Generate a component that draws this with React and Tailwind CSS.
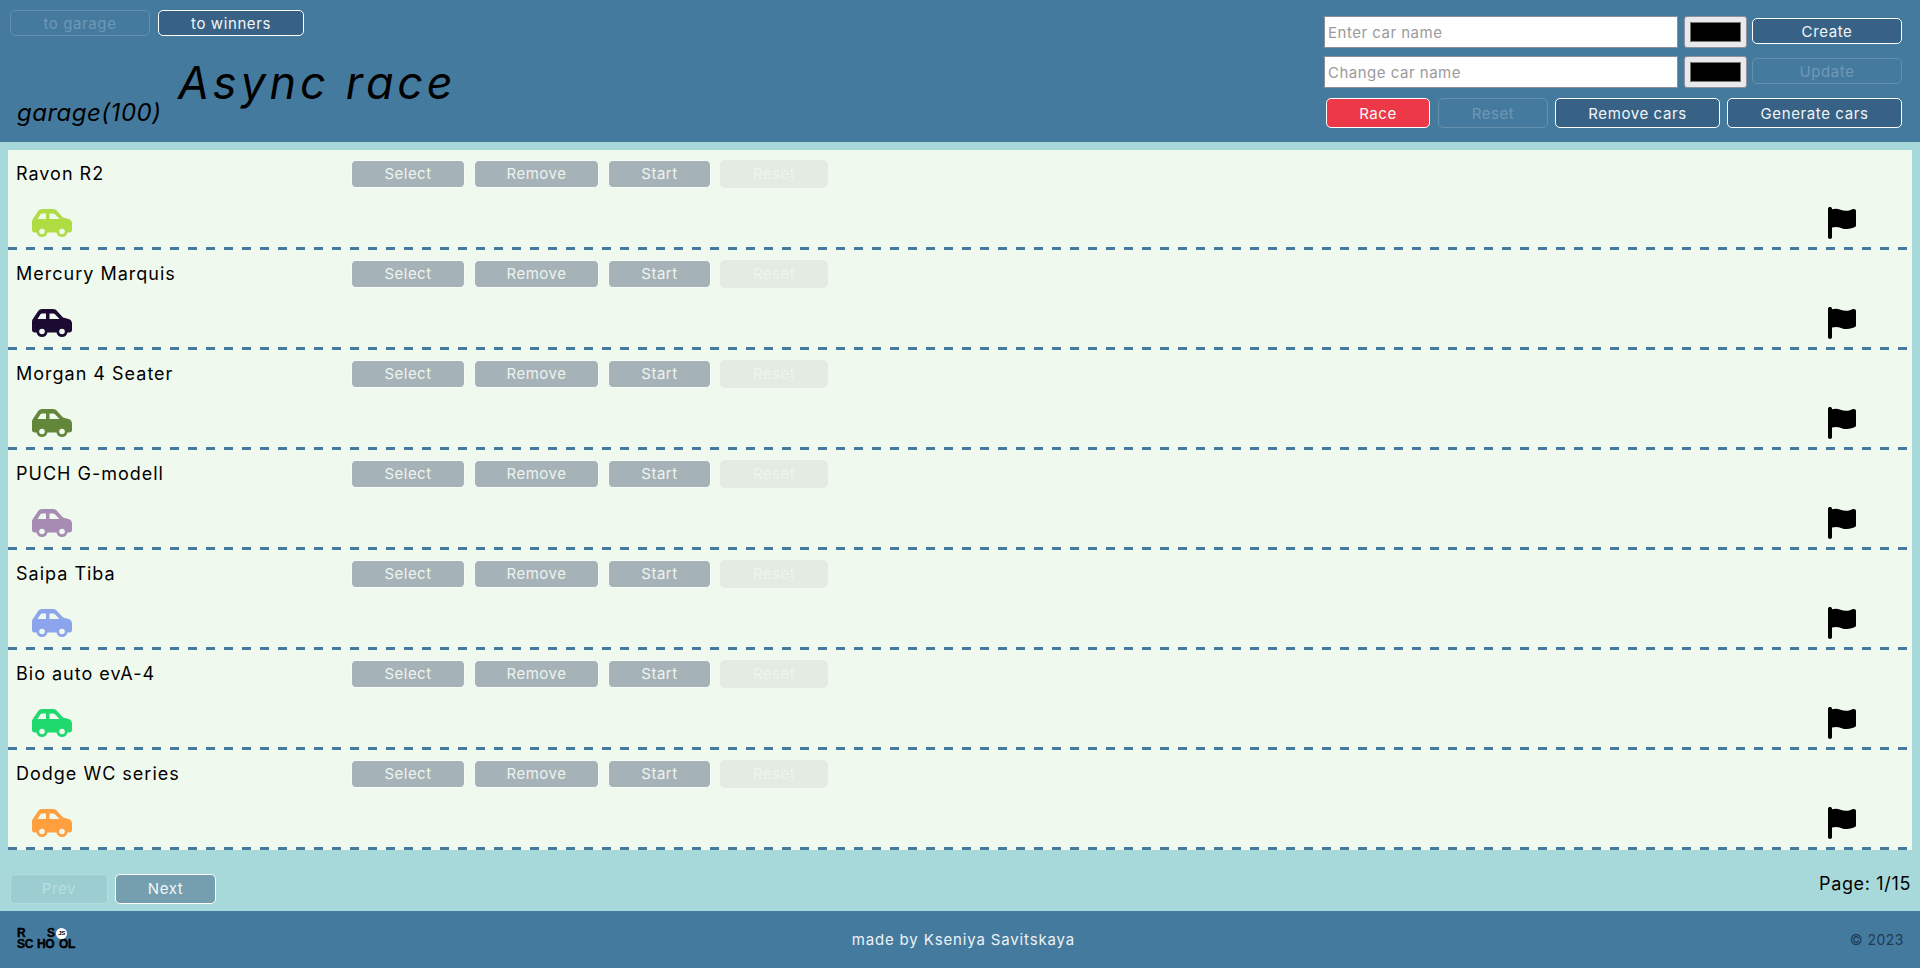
const font = { fontFamily: '"Inter", "Liberation Sans", sans-serif' };

const cars = [
  ['Ravon R2', '#afdc43'],
  ['Mercury Marquis', '#1d0a33'],
  ['Morgan 4 Seater', '#63873a'],
  ['PUCH G-modell', '#a68bb3'],
  ['Saipa Tiba', '#8ba4ec'],
  ['Bio auto evA-4', '#1fd96f'],
  ['Dodge WC series', '#ff9f3d'],
];

function Car({ color }) {
  return (
    <svg width="40" height="28" viewBox="0 0 40 28">
      <path fill={color} fillRule="evenodd" d="M10 0h11c1.600 0 3 .7 4 1.900L31 8.600l5.500 1.300c2 .5 3.500 2.300 3.500 4.400V21c0 1.500-1 2.500-2.500 2.500H2.500C1 23.500 0 22.500 0 21v-8.500c0-1 .3-2 1-2.800L6.200 2C7.200.7 8.500 0 10 0ZM10 4.500c-.6 0-1 .2-1.300.6L5.500 10H14V4.500ZM17.500 4.500V10h10l-4.300-4.600c-.6-.6-1.300-.9-2.100-.9Z" />
      <circle cx="10" cy="22.500" r="5.500" fill={color} />
      <circle cx="30" cy="22.500" r="5.500" fill={color} />
      <circle cx="10" cy="22.500" r="2.800" fill="#f0f9ee" />
      <circle cx="30" cy="22.500" r="2.800" fill="#f0f9ee" />
    </svg>
  );
}

function Flag() {
  return (
    <svg width="28" height="32" viewBox="0 0 28 32" className="block">
      <path fill="#000" d="M2 0c1.100 0 2 .7 2 1.700v.6c3-1 5.500-.8 8.500.4 3.300 1.300 6.500 1.500 10 .2l2.500-.8C26.300 1.700 28 2.500 28 3.800v14.500c0 .9-.5 1.600-1.400 1.900l-3.100 1.100c-3.500 1.200-7 1-10.500-.4-3-1.200-6-1.300-9-.4v9.800c0 1-.9 1.700-2 1.700s-2-.7-2-1.700V1.700C0 .7.900 0 2 0Z" />
    </svg>
  );
}

function Track({ name, color }) {
  return (
    <div className="h-[100px] flex flex-col">
      <div className="flex pt-[10px] h-[59px]">
        <div className="w-[343px] pl-2 pt-[1px] text-[18px] leading-[26px] tracking-[1px] text-black">{name}</div>
        <div className="flex gap-[9px] text-[15px] tracking-[0.5px] text-[#eef4ee] h-[28px]">
          <button className="w-[114px] pt-[1px] rounded-[5px] bg-[#a5b2b7] border border-[#f8fcf8]">Select</button>
          <button className="w-[125px] pt-[1px] rounded-[5px] bg-[#a5b2b7] border border-[#f8fcf8]">Remove</button>
          <button className="w-[103px] pt-[1px] rounded-[5px] bg-[#a5b2b7] border border-[#f8fcf8]">Start</button>
          <button className="w-[108px] pt-[1px] rounded-[5px] bg-[#e3ebe3] text-[#eef5ee]">Reset</button>
        </div>
      </div>
      <div className="flex-1 flex items-start justify-between pl-6 pr-[56px]">
        <Car color={color} />
        <div className="-mt-[2px]"><Flag /></div>
      </div>
      <div className="h-[3px] bg-[repeating-linear-gradient(90deg,#457a9f_0_9px,transparent_9px_18px)]" />
    </div>
  );
}

const on = 'pt-[2px] rounded-[5px] bg-[#386285] border border-white text-[#f2f5f7] text-[15px] tracking-[0.6px]';
const off = 'pt-[2px] rounded-[5px] bg-transparent border border-[#6590ae] text-[#6f98b4] text-[15px] tracking-[0.6px]';
const input = 'w-[354px] h-[32px] bg-white border border-[#8a8f99] px-[3px] text-[15px] tracking-[0.5px] placeholder:text-[#9a9a9a] outline-none';

function Swatch() {
  return (
    <div className="w-[63px] h-[32px] rounded-[3px] bg-[#e9e9ed] border border-[#8f8f9d] p-[5px]">
      <div className="w-full h-full bg-black border border-[#757575]" />
    </div>
  );
}

export default function App() {
  return (
    <div className="w-[1920px] h-[968px] overflow-hidden flex flex-col bg-[#a8d9da]" style={font}>
      <header className="h-[142px] shrink-0 bg-[#457a9f] flex justify-between pr-[18px]">
        <div className="pl-[10px] pt-[10px]">
          <div className="flex gap-[8px]">
            <button className={off + ' w-[140px] h-[26px]'}>to garage</button>
            <button className={on + ' w-[146px] h-[26px]'}>to winners</button>
          </div>
          <div className="flex items-end mt-[19px]">
            <div className="pl-[7px] pb-[1px] w-[168px] text-[24px] leading-[28px] italic text-black tracking-[0.5px]">garage(100)</div>
            <div className="text-[45px] leading-[56px] italic text-black tracking-[3.8px] mb-[17px]">Async race</div>
          </div>
        </div>
        <div className="pt-[16px] w-[578px] flex flex-col">
          <div className="flex items-start gap-[6px] h-[40px]">
            <input className={input} placeholder="Enter car name" />
            <Swatch />
            <button className={on + ' w-[150px] h-[26px] mt-[2px] -ml-[1px]'}>Create</button>
          </div>
          <div className="flex items-start gap-[6px] h-[42px]">
            <input className={input} placeholder="Change car name" />
            <Swatch />
            <button className={off + ' w-[150px] h-[26px] mt-[2px] -ml-[1px]'}>Update</button>
          </div>
          <div className="flex gap-[7px] pl-[2px] h-[30px]">
            <button className="w-[104px] mr-[1px] pt-[2px] rounded-[5px] bg-[#ec3847] border border-white text-[#f8f8f8] text-[15px] tracking-[0.6px]">Race</button>
            <button className={off + ' w-[110px]'}>Reset</button>
            <button className={on + ' w-[165px]'}>Remove cars</button>
            <button className={on + ' w-[175px]'}>Generate cars</button>
          </div>
        </div>
      </header>
      <main className="flex-1 flex flex-col">
        <section className="mt-[8px] mx-2 bg-[#f0f9ee]">
          {cars.map(([n, c]) => <Track key={n} name={n} color={c} />)}
        </section>
        <div className="flex-1 flex justify-between items-start px-[10px] pt-[24px]">
          <div className="flex gap-[7px]">
            <button className="w-[98px] h-[30px] pt-[1px] rounded-[5px] border border-[#b4dfe0] bg-[#9ccdd0] text-[#b6e0e1] text-[15px] tracking-[0.6px]">Prev</button>
            <button className="w-[101px] h-[30px] pt-[1px] rounded-[5px] border border-white bg-[#759eae] text-[#f2f6f7] text-[15px] tracking-[0.6px]">Next</button>
          </div>
          <div className="text-[18px] leading-[22px] -mt-[1px] -mr-[1px] text-black tracking-[0.65px]">Page: 1/15</div>
        </div>
      </main>
      <footer className="h-[57px] shrink-0 bg-[#457a9f] flex items-center justify-between pl-[17px] pr-[16px]">
        <div className="relative w-[60px] h-[22px] -mt-[2px] text-black font-bold text-[12px] leading-[11px] tracking-[-0.3px] [-webkit-text-stroke:0.4px_black]" style={{ fontFamily: '"Liberation Sans", sans-serif' }}>
          <div className="flex"><span className="w-[30px]">R</span><span>S</span></div>
          <div className="flex"><span className="w-[20px]">SC</span><span className="w-[22px]">HO</span><span>OL</span></div>
          <span className="absolute left-[39px] top-0 w-[11px] h-[11px] rounded-full bg-white text-[6px] leading-[11px] text-center [-webkit-text-stroke:0]">JS</span>
        </div>
        <div className="pt-[1px] text-[15px] tracking-[0.85px] text-[#edf2f5]">made by Kseniya Savitskaya</div>
        <div className="text-[14px] tracking-[0.5px] text-[#1e3a52]">© 2023</div>
      </footer>
    </div>
  );
}
